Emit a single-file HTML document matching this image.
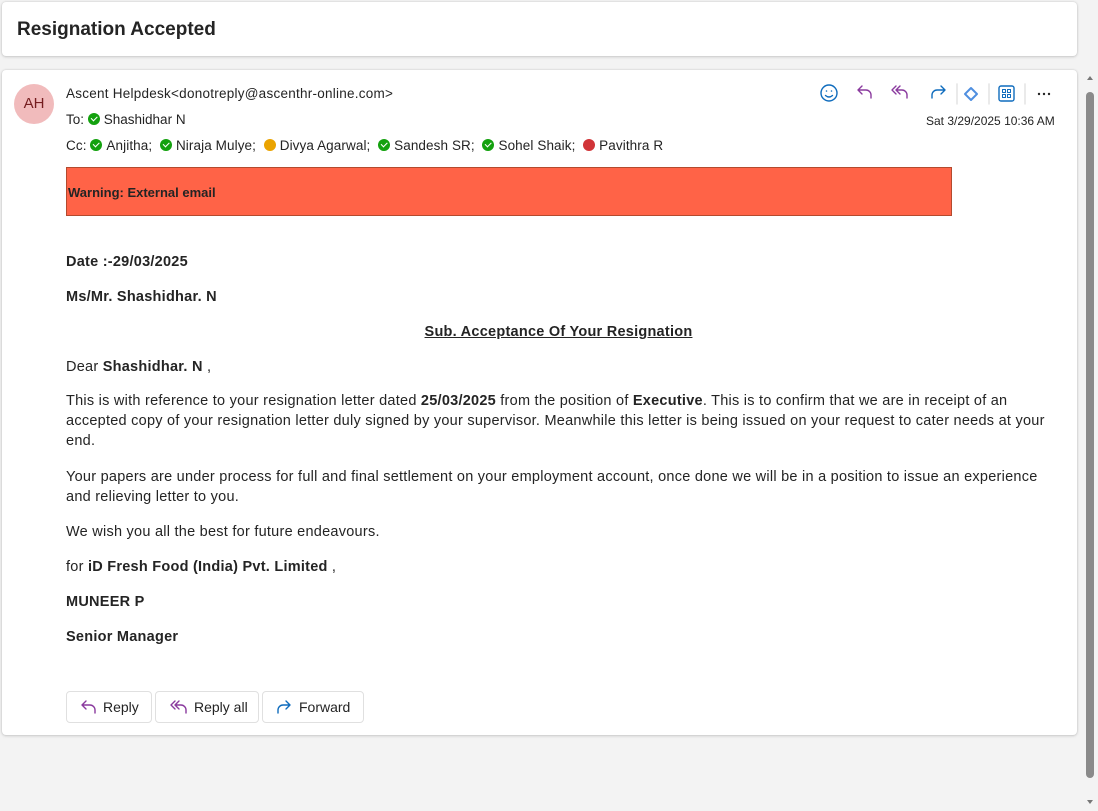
<!DOCTYPE html>
<html><head><style>
*{box-sizing:border-box;margin:0;padding:0}
body{width:1098px;height:811px;background:#f3f3f3;font-family:"Liberation Sans","DejaVu Sans",sans-serif;color:#242424;position:relative;overflow:hidden}
.card{position:absolute;background:#fff;border-radius:4px;box-shadow:0 0 2px rgba(0,0,0,.14),0 1px 3px rgba(0,0,0,.14)}
.t{position:absolute;white-space:nowrap}
.ok,.aw,.bz{display:inline-block;width:12px;height:12px;border-radius:50%;vertical-align:-1px;margin-right:4px;position:relative}
.ok{background:#13a10e}
.ok:after{content:"";position:absolute;left:3px;top:3px;width:5px;height:2.5px;border-left:1.5px solid #fff;border-bottom:1.5px solid #fff;transform:rotate(-45deg)}
.aw{background:#eaa300}.bz{background:#d13438}
.p{position:absolute;left:66px;width:985px;font-size:14.5px;line-height:20px;white-space:nowrap;letter-spacing:.25px}
.btn{position:absolute;top:691px;height:32px;border:1px solid #e0e0e0;border-radius:4px;font-size:14px;line-height:30px;padding-left:12px;background:#fff}
.btn svg{vertical-align:-3px;margin-right:6px}
</style></head><body>
<div class="card" style="left:2px;top:2px;width:1075px;height:54px"></div>
<div class="t" style="left:17px;top:19px;font-size:19px;font-weight:600">Resignation Accepted</div>
<div class="card" style="left:2px;top:70px;width:1075px;height:665px"></div>
<div style="position:absolute;left:14px;top:84px;width:40px;height:40px;border-radius:50%;background:#f1bbbc;color:#751d1f;font-size:15px;text-align:center;line-height:40px">AH</div>
<div class="t" style="left:66px;top:86px;font-size:13.5px;letter-spacing:.25px">Ascent Helpdesk&lt;donotreply@ascenthr-online.com&gt;</div>
<div class="t" style="left:66px;top:112px;font-size:13.5px">To: <span class="ok"></span>Shashidhar N</div>
<div class="t" style="left:66px;top:138px;font-size:13.5px;letter-spacing:.1px">Cc: <span class="ok"></span>Anjitha;&nbsp; <span class="ok"></span>Niraja Mulye;&nbsp; <span class="aw"></span>Divya Agarwal;&nbsp; <span class="ok"></span>Sandesh SR;&nbsp; <span class="ok"></span>Sohel Shaik;&nbsp; <span class="bz"></span>Pavithra R</div>
<div class="t" style="left:926px;top:114px;font-size:12px">Sat 3/29/2025 10:36 AM</div>
<svg style="position:absolute;left:818px;top:82px" width="240" height="24" fill="none" stroke-width="1.4" stroke-linecap="round" stroke-linejoin="round">
<circle cx="11" cy="11" r="8" stroke="#0f6cbd"/><circle cx="8.5" cy="9" r=".8" fill="#0f6cbd" stroke="none"/><circle cx="13.5" cy="9" r=".8" fill="#0f6cbd" stroke="none"/><path d="M7.5 13.5q3.5 3 7 0" stroke="#0f6cbd"/>
<path d="M40 8h8a5 5 0 0 1 5 5v3M40 8l4-4M40 8l4 4" stroke="#8a3a9e"/>
<path d="M78 8h6a5 5 0 0 1 5 5v3M78 8l4-4M78 8l4 4M74 8l4-4M74 8l4 4" stroke="#8a3a9e"/>
<path d="M127 8h-8a5 5 0 0 0-5 5v3M127 8l-4-4M127 8l-4 4" stroke="#0f6cbd"/>
<line x1="139" y1="2" x2="139" y2="22" stroke="#e0e0e0"/>
<path d="M147 12l6-6 6 6-6 6z M153 6l6 6 -3 3" stroke="#4f8fe0" stroke-width="2"/>
<line x1="171" y1="2" x2="171" y2="22" stroke="#e0e0e0"/>
<rect x="181" y="4" width="15" height="15" rx="2" stroke="#0f6cbd"/><rect x="184.5" y="7.5" width="3" height="3" stroke="#0f6cbd" stroke-width="1"/><rect x="189.5" y="7.5" width="3" height="3" stroke="#0f6cbd" stroke-width="1"/><rect x="184.5" y="12.5" width="3" height="3" stroke="#0f6cbd" stroke-width="1"/><rect x="189.5" y="12.5" width="3" height="3" stroke="#0f6cbd" stroke-width="1"/>
<line x1="207" y1="2" x2="207" y2="22" stroke="#e0e0e0"/>
<circle cx="221" cy="12" r="1.2" fill="#242424" stroke="none"/><circle cx="226" cy="12" r="1.2" fill="#242424" stroke="none"/><circle cx="231" cy="12" r="1.2" fill="#242424" stroke="none"/>
</svg>
<div style="position:absolute;left:66px;top:167px;width:886px;height:49px;background:#ff6347;border:1px solid #b34a2e;font-size:13px;font-weight:bold;line-height:49px;padding-left:1px">Warning: External email</div>
<div class="p" style="top:252px;font-weight:bold">Date :-29/03/2025</div>
<div class="p" style="top:287px;font-weight:bold">Ms/Mr. Shashidhar. N</div>
<div class="p" style="top:322px;font-weight:bold;text-align:center;text-decoration:underline">Sub. Acceptance Of Your Resignation</div>
<div class="p" style="top:357px">Dear <b>Shashidhar. N</b> ,</div>
<div class="p" style="top:391px">This is with reference to your resignation letter dated <b>25/03/2025</b> from the position of <b>Executive</b>. This is to confirm that we are in receipt of an<br>accepted copy of your resignation letter duly signed by your supervisor. Meanwhile this letter is being issued on your request to cater needs at your<br>end.</div>
<div class="p" style="top:467px">Your papers are under process for full and final settlement on your employment account, once done we will be in a position to issue an experience<br>and relieving letter to you.</div>
<div class="p" style="top:522px">We wish you all the best for future endeavours.</div>
<div class="p" style="top:557px">for <b>iD Fresh Food (India) Pvt. Limited</b> ,</div>
<div class="p" style="top:592px;font-weight:bold">MUNEER P</div>
<div class="p" style="top:627px;font-weight:bold">Senior Manager</div>
<div class="btn" style="left:66px;width:86px"><svg width="18" height="16" fill="none" stroke="#8a3a9e" stroke-width="1.4" stroke-linecap="round"><path d="M3 6h8a5 5 0 0 1 5 5v3M3 6l4-4M3 6l4 4"/></svg>Reply</div>
<div class="btn" style="left:155px;width:104px"><svg width="20" height="16" fill="none" stroke="#8a3a9e" stroke-width="1.4" stroke-linecap="round"><path d="M7 6h6a5 5 0 0 1 5 5v3M7 6l4-4M7 6l4 4M3 6l4-4M3 6l4 4"/></svg>Reply all</div>
<div class="btn" style="left:262px;width:102px"><svg width="18" height="16" fill="none" stroke="#0f6cbd" stroke-width="1.4" stroke-linecap="round"><path d="M15 6H8a5 5 0 0 0-5 5v3M15 6l-4-4M15 6l-4 4"/></svg>Forward</div>
<div style="position:absolute;left:1086px;top:92px;width:8px;height:686px;background:#8a8a8a;border-radius:4px"></div>
<div style="position:absolute;left:1087px;top:76px;width:0;height:0;border-left:3px solid transparent;border-right:3px solid transparent;border-bottom:4px solid #777"></div>
<div style="position:absolute;left:1087px;top:800px;width:0;height:0;border-left:3px solid transparent;border-right:3px solid transparent;border-top:4px solid #777"></div>
</body></html>
